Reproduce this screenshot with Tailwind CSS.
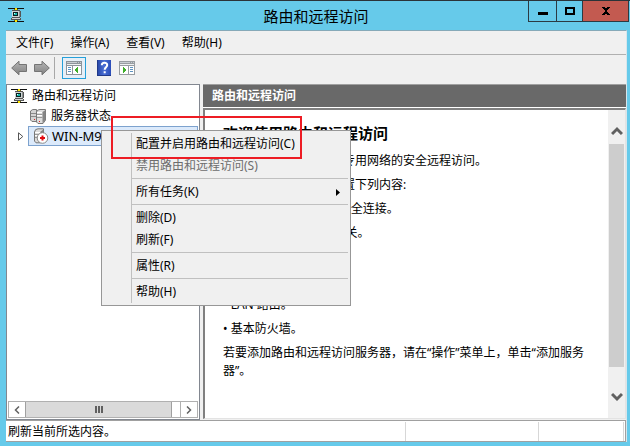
<!DOCTYPE html>
<html lang="zh-CN">
<head>
    <meta charset="UTF-8">
    <meta name="viewport" content="width=device-width, initial-scale=1.0">
    <title>路由和远程访问</title>
    <script src="https://cdn.jsdelivr.net/npm/@tailwindcss/browser@4"></script>
</head>
<body class="relative h-screen flex flex-col overflow-hidden bg-[#66caea] border-t border-[#2b3338] text-xs text-black font-['Noto_Sans','Noto_Sans_CJK_SC',sans-serif]">
    <svg class="absolute size-0" aria-hidden="true">
        <symbol id="red" viewBox="0 0 16 16" shape-rendering="crispEdges">
            <path fill="#111" d="M0 1h16v1H0zM0 14h16v1H0z"/>
            <path fill="#6b6b20" d="M6 2h4v1H6zM6 13h4v1H6z"/>
            <path fill="#ffe600" d="M7 1h2v2H7zM7 13h2v2H7z"/>
            <path fill="#555" d="M4 3h8v1h1v6h-1v1h1v2H3v-2h1z"/>
            <path fill="#d0d4d4" d="M4 4h7v6H4zM4 11h8v1H4z"/>
            <path fill="#8b9292" d="M11 4h1v6h-1z"/>
            <path fill="#0a2020" d="M5 5h5v4H5z"/>
            <path fill="#17b8ac" d="M6 6h3v2H6z"/>
            <path fill="#d8ffff" d="M6 6h1v1H6z"/>
        </symbol>
        <linearGradient id="gris" x1="0" y1="0" x2="0" y2="1"><stop offset="0" stop-color="#b5b5b5"/><stop offset="1" stop-color="#828282"/></linearGradient>
        <linearGradient id="azul" x1="0" y1="0" x2="1" y2="0"><stop offset="0" stop-color="#2443a4"/><stop offset=".5" stop-color="#4a6fd4"/><stop offset="1" stop-color="#2b4db8"/></linearGradient>
    </svg>

    <!-- Barra de título -->
    <header class="h-[29px] shrink-0 grid grid-cols-[1fr_auto_1fr]">
        <div class="pl-2 pt-1.5"><svg class="size-4"><use href="#red"/></svg></div>
        <h1 class="self-center pl-0.5 text-[15px] leading-5">路由和远程访问</h1>
        <div class="flex justify-self-end h-[21px] mr-px border-x border-b border-[#2b3a42]">
            <button aria-label="最小化" class="w-[27px] grid place-items-center">
                <svg class="w-[10px] h-[10px]" viewBox="0 0 10 10" shape-rendering="crispEdges"><path d="M0 6h10v3H0z"/></svg>
            </button>
            <button aria-label="最大化" class="w-[26px] grid place-items-center border-l border-[#2b3a42]">
                <svg class="w-[10px] h-[10px]" viewBox="0 0 10 10" shape-rendering="crispEdges"><path fill-rule="evenodd" d="M0 1h10v8H0zM2 3v4h6V3z"/></svg>
            </button>
            <button aria-label="关闭" class="w-[46px] grid place-items-center border-l border-[#2b3a42] bg-[#c35a50]">
                <svg class="w-[10px] h-[10px]" viewBox="0 0 10 10" shape-rendering="crispEdges"><path d="M1 1h3v1h2V1h3v1H8v1H7v1H6v2h1v1h1v1h1v1H6V8H4v1H1V8h1V7h1V6h1V4H3V3H2V2H1z"/></svg>
            </button>
        </div>
    </header>

    <div class="flex-1 min-h-0 ml-1.5 mr-[3px] mb-1 flex flex-col bg-[#f0f0f0] border-t border-r border-t-[#86a9b8] border-r-[#d8e6ec]">
        <nav class="h-6 shrink-0 flex items-center gap-[17px] pl-2.5 border-b border-[#b0b0b0]">
            <button>文件(F)</button>
            <button>操作(A)</button>
            <button>查看(V)</button>
            <button>帮助(H)</button>
        </nav>

        <!-- Barra de herramientas -->
        <div class="h-[29px] shrink-0 flex items-center pl-[5px] pb-1">
            <button aria-label="后退" class="mr-[7px]">
                <svg class="w-4 h-4" viewBox="0 0 16 16"><path d="M.7 8L8 1.200V4.500h7.500v7H8v3.300z" fill="url(#gris)" stroke="#747474"/></svg>
            </button>
            <button aria-label="前进" class="mr-1">
                <svg class="w-4 h-4" viewBox="0 0 16 16"><path d="M15.300 8L8 1.200V4.500H.5v7H8v3.300z" fill="url(#gris)" stroke="#747474"/></svg>
            </button>
            <span class="w-px h-[22px] mr-[7px] bg-[#a8a8a8]"></span>
            <button aria-label="显示/隐藏控制台树" class="w-6 h-[22px] mr-[11px] grid place-items-center bg-[#e6eff7] border border-[#26a0da]">
                <svg class="w-4 h-[14px]" viewBox="0 0 16 14" shape-rendering="crispEdges">
                    <path fill="#8c949b" d="M0 0h16v14H0z"/><path fill="#c9ced2" d="M1 1h10v1H1zM12 1h1v1h-1zM14 1h1v1h-1z"/><path fill="#eef0f1" d="M1 3h14v1H1z"/>
                    <path fill="#fff" d="M1 5h5v8H1zM7 5h8v8H7z"/><path fill="#5f93c0" d="M2 6h3v1H2zM2 8h3v1H2zM2 10h3v1H2z"/>
                    <path fill="#3fae2a" d="M12 6v6h-1v-1h-1v-1H9V8h1V7h1V6z"/>
                </svg>
            </button>
            <button aria-label="帮助" class="mr-2">
                <svg class="w-[14px] h-4" viewBox="0 0 14 16"><path fill="url(#azul)" d="M0 0h14v16H0z"/><path fill="#203989" d="M0 0h1v16H0zM1 15h13v1H1z"/><path d="M4.800 5.200C4.800 2 10.200 2 10.200 5 10.200 7.300 7.700 7.200 7.700 9.800M7.700 11.200v2" fill="none" stroke="#fff" stroke-width="2"/></svg>
            </button>
            <button aria-label="显示/隐藏操作窗格">
                <svg class="w-4 h-[14px]" viewBox="0 0 16 14" shape-rendering="crispEdges">
                    <path fill="#989da1" d="M0 0h16v14H0z"/><path fill="#c9ced2" d="M1 1h10v1H1zM12 1h1v1h-1zM14 1h1v1h-1z"/><path fill="#eef0f1" d="M1 3h14v1H1z"/>
                    <path fill="#fff" d="M1 5h8v8H1zM10 5h5v8h-5z"/><path fill="#5f93c0" d="M11 6h3v1h-3zM11 8h3v1h-3zM11 10h3v1h-3z"/>
                    <path fill="#3fae2a" d="M4 6h1v1h1v1h1v2H6v1H5v1H4z"/>
                </svg>
            </button>
        </div>

        <main class="flex-1 min-h-0 flex">
            <!-- Árbol -->
            <section class="w-[194px] shrink-0 flex flex-col p-px bg-white border border-[#828790]">
                <ul class="flex-1 leading-5">
                    <li class="h-5 flex items-center gap-[5px] pl-[3px]">
                        <svg class="size-4"><use href="#red"/></svg>路由和远程访问
                    </li>
                    <li class="h-5 flex items-center gap-[5px] pl-[22px]">
                        <svg class="size-4" viewBox="0 0 16 16">
                            <path fill="#d4d4d4" stroke="#7a7a7a" d="M.5 3Q2 .8 6.500 1.500v12H2L.5 12z"/>
                            <path stroke="#8a8a8a" d="M1 5.500h5M1 8.500h5"/>
                            <path fill="#dedede" stroke="#777" d="M6.500 4Q7 1.500 10 1.500h5.500V12L13 15.500H8L6.500 14z"/>
                            <path fill="#858585" d="M12.500 4l3-2v10l-3 3z"/>
                            <path stroke="#999" d="M7 6.500h5.500M7 9.500h5.500"/>
                            <path stroke="#fff" d="M7 4.500h5M7 7.500h5"/>
                            <path fill="#d22" d="M4 11h1v1H4zM9 13h1v1H9z"/>
                        </svg>服务器状态
                    </li>
                    <li class="h-5 flex items-center">
                        <button aria-label="展开" class="w-5 grid place-items-center pl-1.5">
                            <svg class="w-[6px] h-[9px]" viewBox="0 0 6 9"><path fill="#fff" stroke="#555" d="M.5 .8L4.800 4.500.5 8.200z"/></svg>
                        </button>
                        <span class="flex-1 h-5 flex items-center gap-[3px] pl-1 text-[13px] bg-[#dceafb] border border-[#7da2ce]">
                            <svg class="size-4" viewBox="0 0 16 16">
                                <path fill="#dcdcdc" stroke="#777" d="M1.500 4Q2 .8 5 .8h5.500v11l-3 3H3L1.500 13z"/>
                                <path fill="#858585" d="M7.500 3.500l3-2v9l-3 3z"/>
                                <path stroke="#999" d="M2 6.500h5.500M2 9.500h5.500"/><path stroke="#fff" d="M2 4.500h5M2 7.500h5"/>
                                <circle cx="9.500" cy="10" r="5.300" fill="#fff" stroke="#8a8a8a"/><path fill="#e00b12" d="M8.500 7.500h2v1.500H12v2h-1.500v1.500h-2V11H7V9h1.500z"/>
                            </svg>WIN-M9
                        </span>
                    </li>
                </ul>
                <div class="h-[17px] flex bg-white border border-[#b0b0b0]">
                    <button aria-label="向左滚动" class="w-4 grid place-items-center"><svg class="w-[6px] h-2" viewBox="0 0 6 8"><path d="M5 .5L1.500 4 5 7.500" fill="none" stroke="#606060" stroke-width="1.500"/></svg></button>
                    <div class="w-[147px] flex items-center justify-center gap-px bg-[#dadada] border-x border-[#a0a0a0]">
                        <i class="w-0.5 h-[7px] bg-[#606060]"></i><i class="w-0.5 h-[7px] bg-[#606060]"></i><i class="w-0.5 h-[7px] bg-[#606060]"></i>
                    </div>
                    <button aria-label="向右滚动" class="ml-auto w-[17px] grid place-items-center border-l border-[#b0b0b0]"><svg class="w-[6px] h-2" viewBox="0 0 6 8"><path d="M1 .5L4.500 4 1 7.500" fill="none" stroke="#606060" stroke-width="1.500"/></svg></button>
                </div>
            </section>

            <!-- Panel de detalles -->
            <section class="flex-1 min-w-0 ml-[3px] flex flex-col">
                <h2 class="h-6 shrink-0 pl-[9px] text-xs leading-[22px] font-bold text-white bg-[#696969] border-t border-b border-t-[#a0a0a0] border-b-white">路由和远程访问</h2>
                <div class="flex-1 min-h-0 mb-px flex bg-white border-t-2 border-l-2 border-r border-b border-t-[#808080] border-l-[#808080] border-r-[#e3e3e3] border-b-[#e3e3e3]">
                    <article class="flex-1 min-w-0 pl-[18px] pr-4 pt-3 leading-[18px]">
                        <h3 class="mb-2 text-[15px] leading-[22px] font-bold">欢迎使用路由和远程访问</h3>
                        <div class="flex flex-col gap-1.5">
                            <p>路由和远程访问提供对专用网络的安全远程访问。</p>
                            <p>使用路由和远程访问配置下列内容:</p>
                            <p>• 两个专用网络之间的安全连接。</p>
                            <p>• 虚拟专用网络(VPN)网关。</p>
                            <p>• 拨号远程访问。</p>
                            <p>• 网络地址转换(NAT)。</p>
                            <p>• LAN 路由。</p>
                            <p>• 基本防火墙。</p>
                            <p>若要添加路由和远程访问服务器，请在“操作”菜单上，单击“添加服务器”。</p>
                        </div>
                    </article>
                    <div class="w-[17px] shrink-0 flex flex-col bg-[#f0f0f0]">
                        <button aria-label="向上滚动" class="h-[34px] flex items-end justify-center pb-2"><svg class="w-3 h-[10px]" viewBox="0 0 12 10"><path d="M1 8l5-5 5 5" fill="none" stroke="#606060" stroke-width="3"/></svg></button>
                        <div class="flex-1 mx-px bg-[#cdcdcd]"></div>
                        <button aria-label="向下滚动" class="h-[51px] flex items-center justify-center pt-2"><svg class="w-3 h-[10px]" viewBox="0 0 12 10"><path d="M1 2l5 5 5-5" fill="none" stroke="#606060" stroke-width="3"/></svg></button>
                    </div>
                </div>
            </section>
        </main>

        <footer class="h-[22px] shrink-0 flex pt-px pl-0.5 pr-px bg-white border-y border-r border-[#a0a0a0]">
            <p class="flex-1 leading-[19px] border-r border-[#d7d7d7]">刷新当前所选内容。</p>
            <span class="w-[133px] border-r border-[#d7d7d7]"></span>
            <span class="w-[85px] border-r border-[#d7d7d7]"></span>
        </footer>
    </div>

    <!-- Menú contextual -->
    <div role="menu" class="absolute left-[101px] top-[129px] w-[250px] py-0.5 pr-0.5 pl-[29px] bg-[#f0f0f0] border border-[#979797]">
        <div class="flex flex-col border-l border-[#c0c0c0]">
            <button role="menuitem" class="h-[22px] pl-1 text-left">配置并启用路由和远程访问(C)</button>
            <button role="menuitem" disabled class="h-[22px] pl-1 text-left text-[#6d6d6d]">禁用路由和远程访问(S)</button>
            <hr class="mt-px mb-0.5 border-[#c0c0c0]">
            <button role="menuitem" class="h-[22px] pl-1 pr-2 flex items-center justify-between">所有任务(K)
                <svg class="w-1 h-[7px]" viewBox="0 0 4 7"><path d="M0 0l4 3.500L0 7z"/></svg>
            </button>
            <hr class="mt-px mb-0.5 border-[#c0c0c0]">
            <button role="menuitem" class="h-[22px] pl-1 text-left">删除(D)</button>
            <button role="menuitem" class="h-[22px] pl-1 text-left">刷新(F)</button>
            <hr class="mt-px mb-0.5 border-[#c0c0c0]">
            <button role="menuitem" class="h-[22px] pl-1 text-left">属性(R)</button>
            <hr class="mt-px mb-0.5 border-[#c0c0c0]">
            <button role="menuitem" class="h-[22px] pl-1 text-left">帮助(H)</button>
        </div>
    </div>
    <div class="absolute left-[111px] top-[115px] w-[191px] h-[43px] border-2 border-[#ed1c24] pointer-events-none"></div>
</body>
</html>
